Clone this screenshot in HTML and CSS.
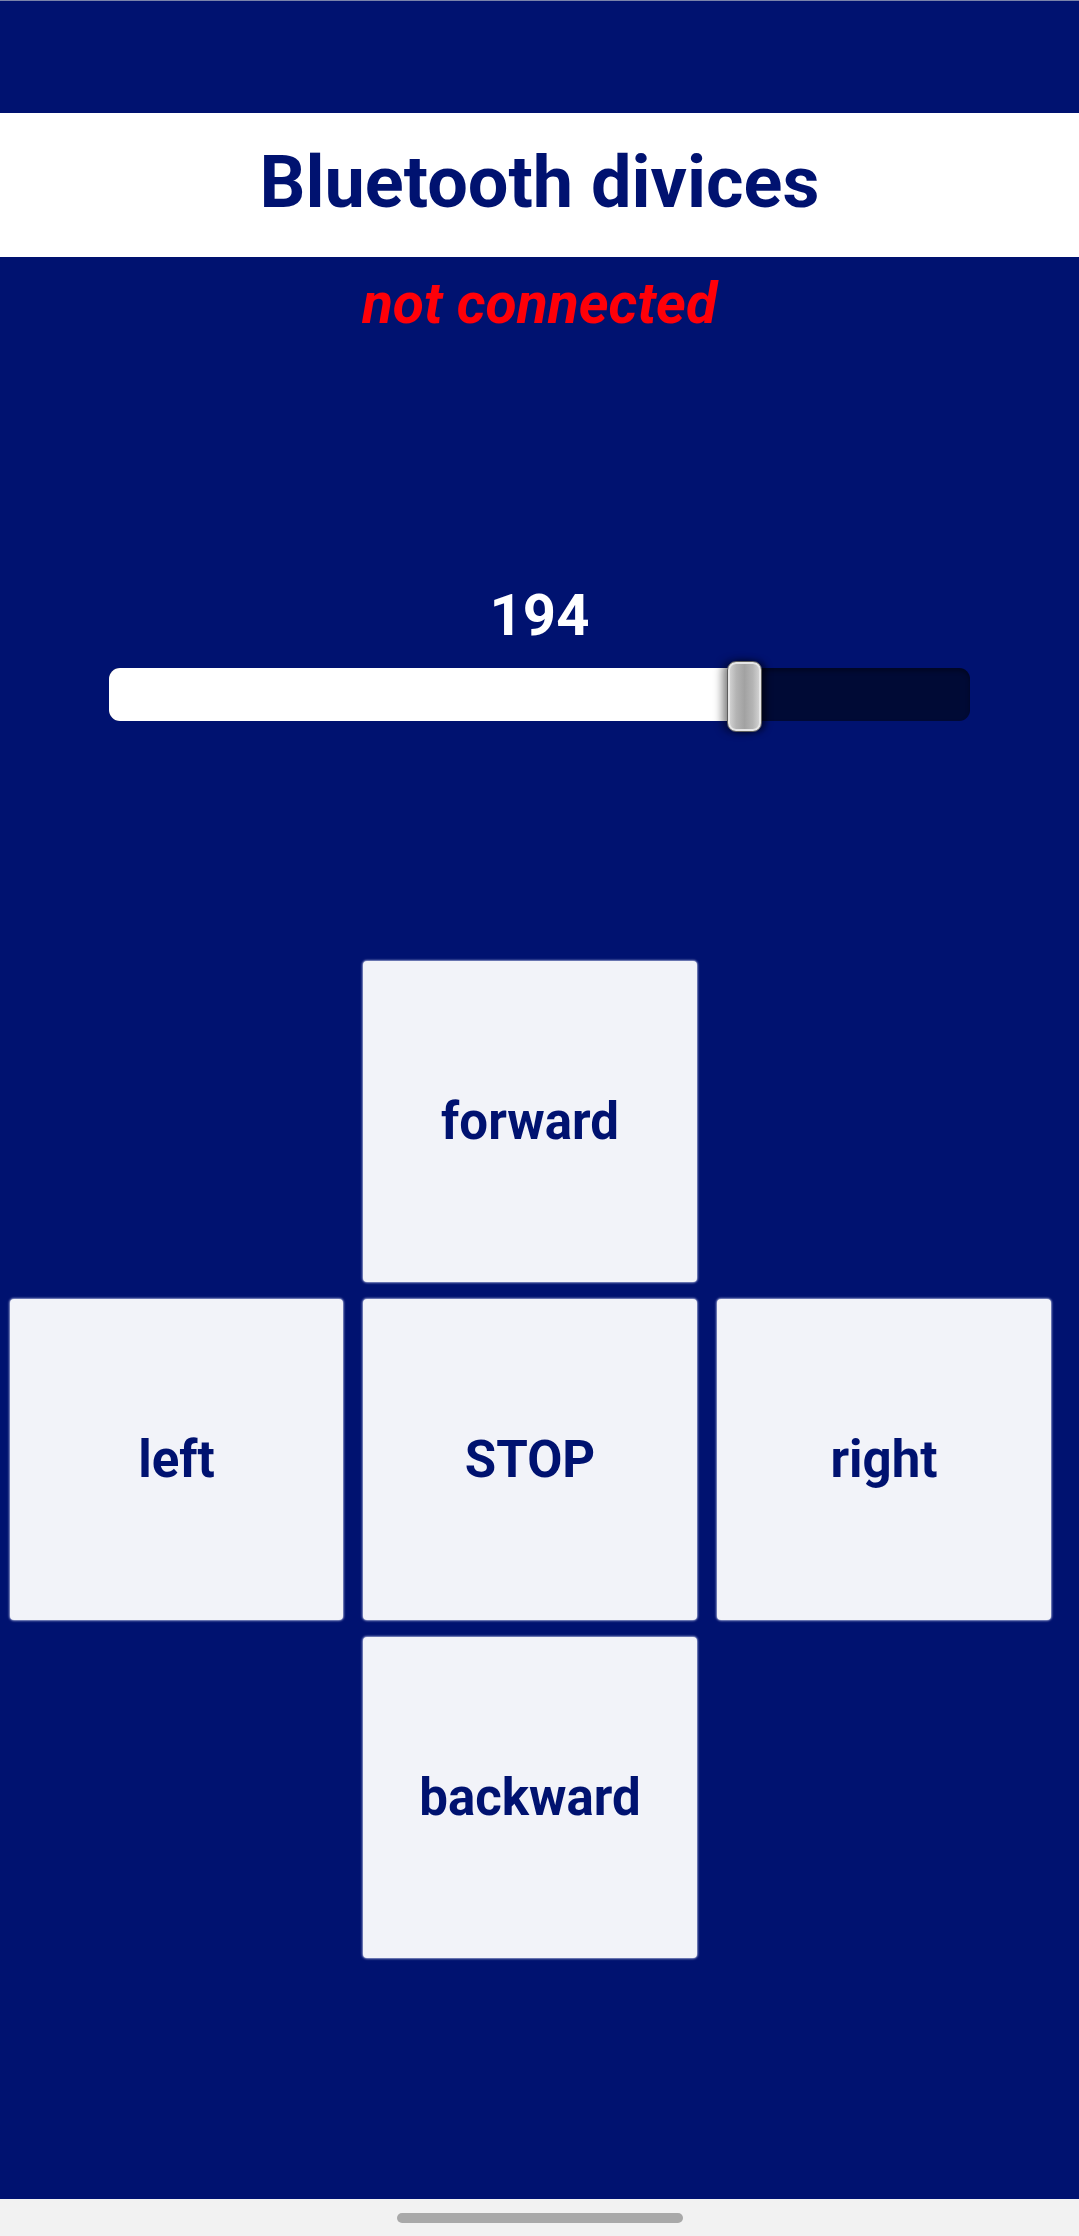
FILE: index.html
```html
<!DOCTYPE html>
<html lang="en">
<head>
<meta charset="utf-8">
<title>Bluetooth divices</title>
<link rel="stylesheet" href="styles.css">
</head>
<body>
<div class="screen">
  <div class="status"></div>
  <header class="header"><h1 class="title">Bluetooth divices</h1></header>
  <main class="main">
    <p class="state">not connected</p>
    <div class="value">194</div>
    <div class="slider">
      <div class="track">
        <div class="fill" style="width: 626px"></div>
      </div>
      <div class="thumb" style="left: 618px"></div>
    </div>
    <div class="pad">
      <button class="btn btn-forward">forward</button>
      <button class="btn btn-left">left</button>
      <button class="btn btn-stop">STOP</button>
      <button class="btn btn-right">right</button>
      <button class="btn btn-backward">backward</button>
    </div>
  </main>
  <footer class="navbar"><div class="pill"></div></footer>
</div>
</body>
</html>
```
FILE: styles.css
```css
html, body {
  margin: 0;
  padding: 0;
}
body {
  background: #001270;
  font-family: Roboto, "Noto Sans", "Liberation Sans", sans-serif;
}
.screen {
  height: 2236px;
  display: flex;
  flex-direction: column;
  overflow: hidden;
}
.status {
  height: 112px;
  border-top: 1px solid #7a83aa;
  background: #001270;
}
.header {
  background: #ffffff;
  height: 144px;
  box-sizing: border-box;
  padding-bottom: 5px;
}
.title {
  margin: 0;
  text-align: center;
  font-size: 72px;
  line-height: 139px;
  font-weight: 700;
  color: #001270;
}
.main {
  flex: 1;
  display: flex;
  flex-direction: column;
}
.state {
  margin: 0;
  text-align: center;
  font-size: 57px;
  line-height: 94px;
  font-weight: 700;
  font-style: italic;
  color: #ff0008;
}
.value {
  margin-top: 230px;
  text-align: center;
  font-size: 58px;
  line-height: 68px;
  font-weight: 700;
  color: #ffffff;
}
.slider {
  position: relative;
  margin: 12px 0 0 109px;
  width: 861px;
  height: 71px;
}
.track {
  margin-top: 7px;
  height: 53px;
  border-radius: 11px;
  background: #000a35;
  box-shadow: inset 0 3px 4px rgba(0, 0, 0, 0.35);
  overflow: hidden;
}
.fill {
  height: 100%;
  background: #ffffff;
}
.thumb {
  position: absolute;
  top: 0;
  width: 35px;
  height: 71px;
  box-sizing: border-box;
  border-radius: 9px;
  border: 1px solid #5d5d5d;
  background: linear-gradient(to right, #d9d9d9 0%, #b4b4b4 25%, #a2a2a2 50%, #b4b4b4 75%, #d9d9d9 100%);
  box-shadow: inset 0 0 0 2px #e6e6e6, -5px 0 9px rgba(0, 0, 0, 0.45), 4px 0 6px rgba(0, 0, 0, 0.5);
}
.pad {
  margin-top: 229px;
  padding-left: 10px;
  display: grid;
  grid-template-columns: 333px 334px 334px;
  grid-template-rows: repeat(3, 321px);
  column-gap: 20px;
  row-gap: 17px;
}
.btn {
  margin: 0;
  padding: 0;
  border: none;
  border-radius: 4px;
  background: #f2f3f9;
  box-shadow: 0 0 2px 1px rgba(190, 196, 230, 0.75);
  font-family: Roboto, "Noto Sans", "Liberation Sans", sans-serif;
  font-size: 51px;
  font-weight: 700;
  color: #001270;
  display: flex;
  align-items: center;
  justify-content: center;
}
.btn-forward { grid-column: 2; grid-row: 1; }
.btn-left { grid-column: 1; grid-row: 2; }
.btn-stop { grid-column: 2; grid-row: 2; }
.btn-right { grid-column: 3; grid-row: 2; }
.btn-backward { grid-column: 2; grid-row: 3; }
.navbar {
  height: 37px;
  background: #f2f2f2;
  display: flex;
  justify-content: center;
}
.pill {
  margin-top: 14px;
  width: 286px;
  height: 10px;
  border-radius: 5px;
  background: #a9a9a9;
}
```
